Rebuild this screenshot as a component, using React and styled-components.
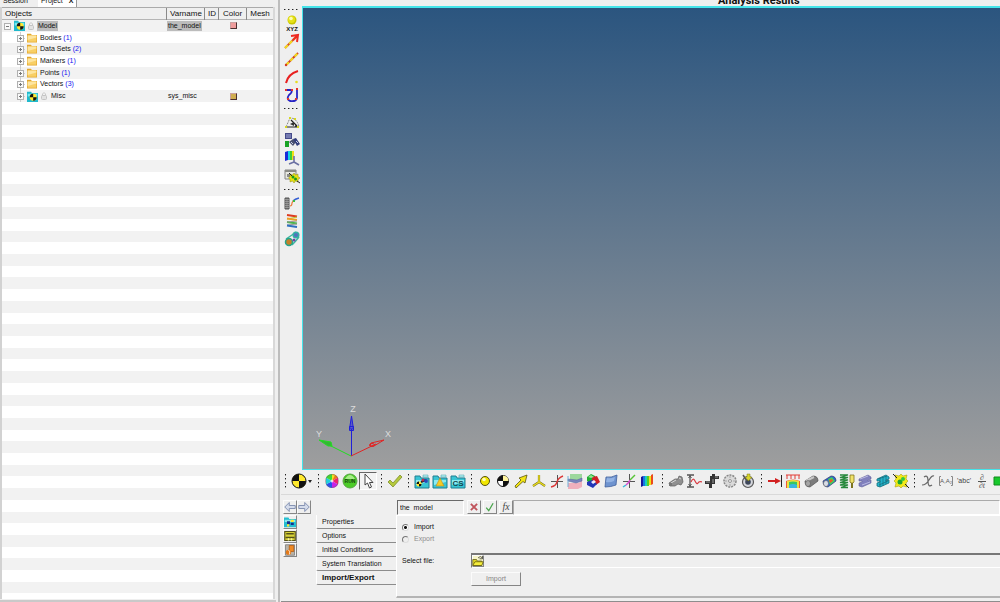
import { useState } from "react";
import styled, { createGlobalStyle, css } from "styled-components";

const GlobalStyle = createGlobalStyle`
  * {
    box-sizing: border-box;
  }

  body {
    margin: 0;
    background: #efefef;
    color: #111;
    font-family: "Liberation Sans", Arial, sans-serif;
    font-size: 7px;
    line-height: 10px;
  }

  button,
  input {
    margin: 0;
    padding: 0;
    border: 0;
    border-radius: 0;
    background: none;
    color: inherit;
    font: inherit;
  }

  svg {
    display: block;
    flex: none;
  }
`;

const Layout = styled.div`
  display: grid;
  grid-template-columns: 276px minmax(0, 1fr);
  height: 100vh;
  overflow: hidden;
`;

/* ---------- browser tree ---------- */

const Sidebar = styled.aside`
  display: flex;
  flex-direction: column;
  min-height: 0;
  padding-bottom: 1px;
  border-bottom: 2px solid #c9c9c9;
`;

const TabStrip = styled.div`
  display: flex;
  align-items: flex-end;
  flex: none;
  height: 7px;
  overflow: hidden;
`;

const StripTab = styled.button`
  display: flex;
  align-items: center;
  gap: 6px;
  height: 12px;
  padding: 0 3px;
  background: ${(props) => (props.$active ? "#fff" : "transparent")};
  border-right: 1px solid ${(props) => (props.$active ? "#999" : "transparent")};
  margin-right: ${(props) => (props.$active ? "0" : "6px")};
`;

const Table = styled.table`
  display: flex;
  flex-direction: column;
  flex: 1;
  min-height: 0;
  margin-right: 1px;
  border-left: 2px solid #d2d2d2;
  border-right: 2px solid #d8d8d8;
`;

const Head = styled.thead`
  display: block;
  flex: none;
`;

const Body = styled.tbody`
  display: flex;
  flex-direction: column;
  flex: 1;
  min-height: 0;
`;

const columns = css`
  display: grid;
  grid-template-columns: 165px 38px 14px 28px minmax(0, 1fr);
`;

const HeadRow = styled.tr`
  ${columns}
  height: 13px;
  border-top: 1px solid #aaa;
  border-bottom: 1px solid #b5b5b5;
  background: #efefef;
`;

const HeadCell = styled.th`
  padding: 0 3px;
  border-right: 1px solid #8a8a8a;
  font-size: 8px;
  font-weight: normal;
  line-height: 12px;
  text-align: ${(props) => (props.$left ? "left" : "center")};

  &:last-child {
    border-right: 0;
  }
`;

const Row = styled.tr`
  ${columns}
  flex: ${(props) => (props.$half ? 1 : 2)} 1 0;
  min-height: 0;
  background: #fff;

  &:nth-child(odd) {
    background: #f2f2f2;
  }

  &:last-child {
    background: #fff;
  }
`;

const Cell = styled.td`
  display: flex;
  align-items: center;
  justify-content: ${(props) => (props.$center ? "center" : "flex-start")};
  gap: 2px;
  min-height: 0;
  padding: 0 0 0 ${(props) => props.$indent || 0}px;
  white-space: nowrap;
`;

const Label = styled.span`
  padding: 0 1px;
  background: ${(props) => (props.$selected ? "#bcbcbc" : "transparent")};
`;

const Count = styled.span`
  color: #1414f0;
`;

const Swatch = styled.span`
  width: 7px;
  height: 7px;
  border: 1px solid;
  border-color: #c9a0a0 #4a3030 #4a3030 #c9a0a0;
  background: ${(props) => props.$color};
`;

/* ---------- work area ---------- */

const Main = styled.main`
  display: flex;
  flex-direction: column;
  min-width: 0;
  min-height: 0;
  margin-left: 2px;
  border-left: 2px solid #bdbdbd;
  padding-left: 1px;
`;

const Stage = styled.div`
  display: flex;
  flex: 1;
  min-height: 0;
`;

const SideTools = styled.div`
  display: flex;
  flex-direction: column;
  align-items: center;
  flex: none;
  width: 21px;
  padding-top: 5px;
`;

const Window = styled.section`
  display: flex;
  flex-direction: column;
  flex: 1;
  min-width: 0;
`;

const Title = styled.h1`
  display: flex;
  align-items: flex-end;
  flex: none;
  height: 6px;
  margin: 0;
  padding-left: 416px;
  overflow: hidden;
  font-family: Roboto, "Liberation Sans", sans-serif;
  font-size: 11px;
  line-height: 10px;
  white-space: nowrap;
`;

const Canvas = styled.div`
  display: flex;
  align-items: flex-end;
  flex: 1;
  padding: 0 0 9px 9px;
  border: 1px solid #45e4ea;
  border-width: 2px 0 1px 1px;
  background: linear-gradient(#2b557f, #9e9e9e);
`;

const BottomTools = styled.div`
  display: flex;
  align-items: center;
  flex: none;
  height: 24px;
  padding-bottom: 2px;
  overflow: hidden;
`;

const Group = styled.div`
  display: flex;
  align-items: center;
  flex: none;
  padding-right: ${(props) => (props.$long ? 2 : 0)}px;
`;

const Grip = styled.span`
  flex: none;
  ${(props) =>
    props.$across
      ? css`
          width: 15px;
          height: 9px;
          background: linear-gradient(90deg, #222 1px, #9a9a9a 1px, #9a9a9a 2px, transparent 2px) 0 4px / 4px 1px repeat-x;
          background-clip: content-box;
          background-repeat: repeat-x;
        `
      : css`
          width: 9px;
          height: 15px;
          background: linear-gradient(#222 1px, #9a9a9a 1px, #9a9a9a 2px, transparent 2px) 4px 0 / 1px 4px repeat-y;
        `}
`;

const ToolButton = styled.button`
  display: flex;
  align-items: center;
  justify-content: center;
  flex: none;
  width: 18px;
  height: 18px;
  border: 1px solid transparent;
  ${(props) =>
    props.$pressed &&
    css`
      border-color: #666 #fff #fff #666;
      background: #f3f3f3;
    `}
`;

const MenuArrow = styled.button`
  display: flex;
  align-items: center;
  width: 6px;
  height: 18px;
`;

/* ---------- property panel ---------- */

const Panel = styled.section`
  flex: none;
  padding: 5px 0 3px 2px;
  border-top: 1px solid #d9d9d9;
  border-bottom: 1px solid #8d8d8d;
`;

const PanelTop = styled.div`
  display: flex;
  height: 15px;
`;

const raised = css`
  display: flex;
  align-items: center;
  justify-content: center;
  flex: none;
  border: 1px solid;
  border-color: #fbfbfb #858585 #858585 #fbfbfb;
  background: #efefef;
`;

const sunken = css`
  border: 1px solid;
  border-color: #6a6a6a #fff #fff #6a6a6a;
`;

const SmallButton = styled.button`
  ${raised}
  width: 14px;
  height: 14px;
`;

const History = styled.div`
  display: flex;
  width: 114px;
`;

const NameInput = styled.input`
  ${sunken}
  width: 67px;
  height: 15px;
  padding: 0 2px;
`;

const NameActions = styled.div`
  display: flex;
  gap: 2px;
  padding-left: 3px;
`;

const ExpressionInput = styled.input`
  ${sunken}
  flex: 1;
  min-width: 0;
  height: 15px;
  padding: 0 2px;
  border-color: #aaa #fff #fff #aaa;
`;

const PanelBody = styled.div`
  display: flex;
`;

const Modes = styled.div`
  display: flex;
  flex-direction: column;
  width: 33px;
`;

const PageTabs = styled.nav`
  display: flex;
  flex-direction: column;
  width: 80px;
`;

const PageTab = styled.button`
  height: 14px;
  padding: 0 5px;
  border-bottom: 1px solid #8c8c8c;
  border-left: 1px solid #fff;
  border-bottom-left-radius: 2px;
  font-size: ${(props) => (props.$active ? 8 : 7)}px;
  font-weight: ${(props) => (props.$active ? "bold" : "normal")};
  text-align: left;
  white-space: nowrap;
`;

const Page = styled.form`
  display: grid;
  grid-template-columns: 69px minmax(0, 1fr);
  grid-template-rows: 12px 12px 15px 14px;
  align-content: start;
  align-items: center;
  flex: 1;
  min-width: 0;
  height: 83px;
  padding: 5px 0 0 5px;
  row-gap: 4px;
  border: 1px solid;
  border-width: 1px 0 2px 1px;
  border-color: #fff #fff #b4b4b4 #fff;
`;

const Choices = styled.div`
  display: flex;
  flex-direction: column;
  grid-column: 1 / -1;
  grid-row: 1 / 3;
  align-self: start;
`;

const Choice = styled.label`
  display: flex;
  align-items: center;
  gap: 5px;
  height: 12px;
  color: ${(props) => (props.$off ? "#8e8e8e" : "#111")};
`;

const Radio = styled.input`
  appearance: none;
  width: 7px;
  height: 7px;
  border: 1px solid;
  border-color: #777 #ddd #ddd #777;
  border-radius: 50%;
  background: ${(props) => (props.disabled ? "#eee" : "#fff")};

  &:checked {
    background: radial-gradient(circle, #111 1px, #fff 2px);
  }
`;

const FileField = styled.div`
  display: flex;
  height: 15px;
  border-top: 2px solid #777;
  border-bottom: 1px solid #fff;
  border-left: 1px solid #777;
`;

const FileInput = styled.input`
  flex: 1;
  min-width: 0;
  padding: 0 3px;
`;

const OpenButton = styled.button`
  ${raised}
  width: 12px;
  height: 12px;
  background: #f6f4c8;
`;

const ImportButton = styled.button`
  ${raised}
  grid-column: 2;
  width: 50px;
  height: 14px;
  color: #858585;
`;

/* ---------- icons ---------- */

const Icon = ({ size = 16, children }) => (
  <svg width={size} height={size} viewBox="0 0 16 16" fill="none" aria-hidden="true">
    {children}
  </svg>
);

const Quarters = ({ r = 7, light = "#ffe92e" }) => (
  <>
    <circle cx="8" cy="8" r={r} fill={light} stroke="#111" />
    <path d={`M8 8V${8 - r}A${r} ${r} 0 0 0 ${8 - r} 8ZM8 8V${8 + r}A${r} ${r} 0 0 0 ${8 + r} 8Z`} fill="#111" />
  </>
);

const CyanFolder = ({ children }) => (
  <Icon>
    <path d="M1 3h5l1 2h8v10H1z" fill="#38c4d4" stroke="#207f90" />
    <path d="M2 7h12v2L2 12z" fill="#8beaf0" />
    <path d="M9 2h5v2H9z" fill="#b5f2f2" stroke="#55a9b4" strokeWidth=".6" />
    {children}
  </Icon>
);

const ModelIcon = () => (
  <Icon size={11}>
    <path d="M0 1h6l1 2h9v13H0z" fill="#20b9cc" />
    <path d="M1 4h14v4H1z" fill="#79e8f0" />
    <circle cx="9" cy="9" r="5" fill="#ffe92e" />
    <path d="M9 9V4a5 5 0 0 0-5 5zM9 9v5a5 5 0 0 0 5-5z" fill="#111" />
  </Icon>
);

const FolderIcon = () => (
  <Icon size={10}>
    <path d="M0 1h6l2 2h8v12H0z" fill="#e2a62c" />
    <path d="M1 4h14v10H1z" fill="#f8cf66" />
    <path d="M1 4h14v3L1 11z" fill="#fde5a0" />
  </Icon>
);

const LockIcon = () => (
  <svg width="8" height="10" viewBox="0 0 8 10" fill="none" aria-hidden="true">
    <path d="M2.500 5V3q1.500-3 3 0v2" stroke="#c8c8c8" />
    <rect x="1.500" y="4.500" width="5" height="4" rx="1" fill="#e2e2e2" stroke="#c4c4c4" />
  </svg>
);

const ExpanderButton = styled.button`
  width: 10px;
  height: 12px;
`;

const Expander = ({ open, onClick }) => (
  <ExpanderButton type="button" aria-label={open ? "Collapse" : "Expand"} onClick={onClick}>
    <svg width="10" height="12" viewBox="0 0 10 12" fill="none">
      {!open && <path d="M5.500 0v3M5.500 9v3M9 6.500h1" stroke="#cfcfcf" />}
      <rect x="2.500" y="3.500" width="6" height="6" fill="#fafafa" stroke="#b0b0b0" />
      <path d={open ? "M4 6.500h3" : "M4 6.500h3M5.500 5v3"} stroke="#777" />
    </svg>
  </ExpanderButton>
);

const icons = {
  point: (
    <Icon>
      <circle cx="8" cy="5" r="4.500" fill="#c9c500" />
      <circle cx="7.500" cy="4.500" r="3.500" fill="#e6e21a" />
      <circle cx="7" cy="3.500" r="1.800" fill="#fdfbb0" />
      <text x="8" y="16" fontSize="6" fontWeight="bold" textAnchor="middle" fill="#111">XYZ</text>
    </Icon>
  ),
  vector: (
    <Icon>
      <path d="M1 15 13 3" stroke="#d9552a" strokeWidth="2" />
      <path d="M1 15 13 3" stroke="#f2dc20" strokeWidth="2" strokeDasharray="4 2" />
      <path d="M7 3l7-1-1 7M9 7l5-5" stroke="#ee2a22" strokeWidth="2" />
    </Icon>
  ),
  line: (
    <Icon>
      <path d="M2 14 14 2" stroke="#d33b27" strokeWidth="2" />
      <path d="M2 14 14 2" stroke="#f0dc1e" strokeWidth="2" strokeDasharray="4 2" />
      <circle cx="2" cy="14" r="1.200" fill="#d33b27" />
    </Icon>
  ),
  arc: (
    <Icon>
      <path d="M2 14Q4 5 14 2" stroke="#e82020" strokeWidth="2" />
      <circle cx="12.500" cy="13" r="1.300" fill="#e6de20" />
    </Icon>
  ),
  curve: (
    <Icon>
      <path d="M2 3h5q2 2-2 5-3 4 1 6 6 1 7-3L13 2" stroke="#2723c4" strokeWidth="1.800" />
      <path d="M1 2h2v2H1zM7 2h2v2H7zM12 1h2v2h-2zM3 11h2v2H3zM11 11h2v2h-2z" fill="#e2332e" />
    </Icon>
  ),
  angle: (
    <Icon>
      <path d="M2 13 6 4q7 0 9 9" stroke="#888" strokeDasharray="2 1" />
      <path d="M3 13h11M7 6l6 6" stroke="#222" strokeWidth="1.200" />
      <path d="M6 10l4-2v4zM11 11l4 2h-4z" fill="#333" />
      <path d="M1 12h2v2H1zM5 3h2v2H5zM13 12h2v2h-2zM10 4h2v2h-2z" fill="#d8d820" />
    </Icon>
  ),
  joints: (
    <Icon>
      <path d="M1 1h7v6H1z" fill="#454b8a" />
      <path d="M2 3h5M2 5h5" stroke="#a6acd8" />
      <path d="M1 9h4v6H1z" fill="#18a324" />
      <path d="M5 10l4-3 3 3-3 4z" fill="#48506f" />
      <path d="M9 7l3-1 4 6-3 2z" fill="#313d7b" />
      <path d="M7 10l2 2M12 9l2 2" stroke="#c6cbe5" />
    </Icon>
  ),
  contour: (
    <Icon>
      <path d="M1 2l3-1v9l-3 1z" fill="#1a2bd9" />
      <path d="M4 1h2v9H4z" fill="#19d4df" />
      <path d="M6 1h2v9H6z" fill="#40cf30" />
      <path d="M8 1h2v9H8z" fill="#f1df16" />
      <path d="M10 6v6M10 12l5 3M10 12l-5 2" stroke="#6c71a3" strokeWidth="1.600" />
    </Icon>
  ),
  gearbox: (
    <Icon>
      <path d="M1 2h11v9H1z" fill="#e8e8e2" stroke="#848484" />
      <path d="M1 2h11v2H1zM3 6h3v3H3z" fill="#8b8b86" />
      <path d="M10 5l1.500 2 2.500-1v2.500l2 1.500-2 1.500V14l-2.500-1L10 15l-1.500-2L6 14v-2.500L4.500 10 6 8.500V6l2.500 1z" fill="#e8e012" stroke="#8a8718" strokeWidth=".5" />
      <circle cx="9" cy="9" r="1.500" fill="#1a9a1e" />
      <circle cx="11.500" cy="11" r="1.500" fill="#1a9a1e" />
      <path d="M5 5l3 3M13 13l3 2" stroke="#222" />
    </Icon>
  ),
  spring: (
    <Icon>
      <path d="M1 3h4v11H1z" fill="#777" stroke="#555" />
      <path d="M2 4v9M4 4v9" stroke="#bbb" strokeDasharray="1 1" />
      <path d="M6 11q2 0 2-3 1-3 3-3" stroke="#e77d3c" strokeWidth="1.200" />
      <path d="M9 6q2-2 6-3" stroke="#355fd4" strokeWidth="1.500" />
      <path d="M9 5h2v2H9z" fill="#33bb44" />
    </Icon>
  ),
  coil: (
    <Icon>
      <path d="M3 2l10 1.500" stroke="#de3b20" strokeWidth="2" />
      <path d="M13 4L3 6" stroke="#b9c832" />
      <path d="M3 5.500L13 7" stroke="#ef9e22" strokeWidth="2" />
      <path d="M3 9l10 1.500" stroke="#48b64a" strokeWidth="2" />
      <path d="M13 8L3 9M13 11L3 12" stroke="#999" />
      <path d="M3 12.500L13 14" stroke="#2d70c0" strokeWidth="2" />
    </Icon>
  ),
  belt: (
    <Icon>
      <path d="M2 8Q5 6 8 4t4-3M8 14q3-3 7-8" stroke="#3eb6a0" strokeWidth="1.500" />
      <circle cx="5" cy="11" r="3.500" fill="#c4812a" stroke="#24a58b" strokeWidth="1.500" />
      <circle cx="12" cy="4" r="2.800" fill="#5372be" stroke="#33b1a5" strokeWidth="1.500" />
      <circle cx="10" cy="9" r="1.500" fill="#7140a8" />
    </Icon>
  ),
  cg: (
    <Icon>
      <Quarters />
    </Icon>
  ),
  wheel: (
    <Icon>
      <path d="M8 8V1a7 7 0 0 1 6 3.500z" fill="#f07818" />
      <path d="M8 8l6-3.500v7z" fill="#f02070" />
      <path d="M8 8l6 3.500A7 7 0 0 1 8 15z" fill="#c820e8" />
      <path d="M8 8v7a7 7 0 0 1-6-3.500z" fill="#2850f0" />
      <path d="M8 8l-6 3.500v-7z" fill="#20d0dc" />
      <path d="M8 8L2 4.500A7 7 0 0 1 8 1z" fill="#40d930" />
      <path d="M8 8V1l3 1z" fill="#f4e020" />
      <circle cx="8" cy="8" r="1.500" fill="#fff" opacity=".7" />
      <circle cx="8" cy="8" r="6.500" stroke="#666" strokeWidth=".5" />
    </Icon>
  ),
  run: (
    <Icon>
      <circle cx="8" cy="8" r="7" fill="#4ccc28" stroke="#58a545" />
      <path d="M3 6q5-8 10 0z" fill="#a7ee88" />
      <text x="8" y="10" fontSize="5" fontWeight="bold" textAnchor="middle" fill="#17450e">RUN</text>
    </Icon>
  ),
  cursor: (
    <Icon>
      <path d="M5 1v11l2.500-2 2 5 2-1-2-4.500H13z" fill="#fff" stroke="#444" />
    </Icon>
  ),
  check: (
    <Icon>
      <path d="M1 9l2-2 3 3 7-8 2 2-9 10z" fill="#b5c93c" stroke="#7d8f2c" strokeWidth=".8" />
    </Icon>
  ),
  folderModel: (
    <CyanFolder>
      <circle cx="5" cy="11" r="2.500" fill="#ffe92e" />
      <path d="M5 11V8.500A2.500 2.500 0 0 0 2.500 11zM5 11v2.500A2.500 2.500 0 0 0 7.500 11z" fill="#111" />
      <path d="M7 9l5-2" stroke="#222" strokeWidth="2" />
      <circle cx="9" cy="7" r="1.500" fill="#c42a4a" />
      <circle cx="12" cy="8" r="2" fill="#254bb7" />
    </CyanFolder>
  ),
  folderCone: (
    <CyanFolder>
      <path d="M8 5l4 8H4z" fill="#f4cb25" stroke="#c48a14" strokeWidth=".6" />
    </CyanFolder>
  ),
  folderCs: (
    <CyanFolder>
      <text x="8" y="13" fontSize="8" fontWeight="bold" textAnchor="middle" fill="#16454c">CS</text>
    </CyanFolder>
  ),
  ball: (
    <Icon>
      <circle cx="8" cy="8" r="4.500" fill="#f1e600" stroke="#555213" />
      <circle cx="7" cy="6.500" r="1.800" fill="#fffcb8" />
    </Icon>
  ),
  body: (
    <Icon>
      <Quarters r={5.5} light="#fff" />
      <path d="M8 8V2.500A5.500 5.500 0 0 1 13.500 8z" fill="#fff59e" />
    </Icon>
  ),
  arrow: (
    <Icon>
      <path d="M14 2L12 10 10 8.500 3 15 2 13 8 7 6 5z" fill="#f3e512" stroke="#5a5512" strokeWidth=".8" />
    </Icon>
  ),
  axes: (
    <Icon>
      <path d="M8 2v7l6 4M8 9l-6 4" stroke="#77701c" strokeWidth="2.200" />
      <path d="M8 2v7l6 4M8 9l-6 4" stroke="#eadd1d" strokeWidth="1.400" />
    </Icon>
  ),
  spline: (
    <Icon>
      <path d="M8.500 2v13M2 8.500h12" stroke="#555" />
      <path d="M2 14q5-1 6-5t6-6" stroke="#dc3737" strokeWidth="1.400" />
    </Icon>
  ),
  surfaces: (
    <Icon>
      <path d="M3 1h12v7H3z" fill="#9cd89c" />
      <path d="M1 10h11l3-3v7l-4 2H1z" fill="#efb0bd" />
      <path d="M1 6l9 1 5-2v3l-6 2-8-2z" fill="#7784bd" stroke="#545d9a" strokeWidth=".5" />
      <path d="M1 3v11" stroke="#70b0d8" />
    </Icon>
  ),
  solids: (
    <Icon>
      <path d="M2 4l4-3 4 2v5l-4 3-4-3z" fill="#1fae32" />
      <path d="M7 4l5-1 3 6-4 3-4-3z" fill="#cf1f25" />
      <path d="M2 9l5-2 5 4-4 4-6-3z" fill="#2236b7" />
      <path d="M3 4l3-2 3 2-3 1z" fill="#8fe491" />
      <path d="M6 9l3-2 2 2-3 2z" fill="#eef" />
    </Icon>
  ),
  plate: (
    <Icon>
      <path d="M3 4q5 1 11-2l-1 10q-5 2-11 2z" fill="#6e93cf" stroke="#40609c" strokeWidth=".8" />
      <path d="M4 5q4 1 8-1l-1 4q-4 2-8 1z" fill="#93b3e4" />
    </Icon>
  ),
  colorAxes: (
    <Icon>
      <path d="M8.500 1v14M2 8.500h12" stroke="#555" />
      <path d="M2 14l3-2" stroke="#3ab5dc" strokeWidth="1.500" />
      <path d="M5 12q3-2 4-5" stroke="#d94ad3" strokeWidth="1.500" />
      <path d="M9 7l5-5" stroke="#57c436" strokeWidth="1.500" />
    </Icon>
  ),
  rainbow: (
    <Icon>
      <path d="M2 4l2-1v10l-2 1z" fill="#17189c" />
      <path d="M4 3h2v10H4z" fill="#1678e4" />
      <path d="M6 3h2v10H6z" fill="#1ccfba" />
      <path d="M8 3h2v10H8z" fill="#56cf24" />
      <path d="M10 3h2v9h-2z" fill="#f2e317" />
      <path d="M12 2l2-1v10l-2 1z" fill="#ea4a1c" />
    </Icon>
  ),
  bushing: (
    <Icon>
      <path d="M1 10l6-4 3 0 1-3 3 1 1 5-2 3-3-1-3 2H2z" fill="#909090" stroke="#5c5c5c" strokeWidth=".7" />
      <path d="M3 10l5-3M11 5l2 1" stroke="#d8d8d8" />
      <path d="M1 10h3v3H1z" fill="#777" />
    </Icon>
  ),
  damper: (
    <Icon>
      <path d="M1 2h7M1 14h7M4 2v12" stroke="#555" strokeWidth="1.300" />
      <path d="M2.500 5L4 3l1.500 2M2.500 11L4 13l1.500-2" stroke="#555" />
      <path d="M5 9q2-5 4-1t3 2 4-1" stroke="#d83a42" strokeWidth="1.200" />
    </Icon>
  ),
  joint: (
    <Icon>
      <path d="M8 1h3v2h4v3h-4v5H8v4H5v-4H1V8h5V3h2z" fill="#343434" />
      <path d="M11 4h3M2 9h4M9 6v4" stroke="#999" />
    </Icon>
  ),
  gear: (
    <Icon>
      <circle cx="8" cy="8" r="6" fill="#dadada" stroke="#888" strokeWidth="1.500" strokeDasharray="2 1" />
      <circle cx="8" cy="8" r="1.500" fill="#eee" stroke="#999" />
      <path d="M8 3v2M8 11v2M3 8h2M11 8h2" stroke="#aaa" />
    </Icon>
  ),
  motor: (
    <Icon>
      <circle cx="8" cy="9" r="5.500" fill="#d4d6dc" stroke="#555" strokeWidth="1.200" />
      <circle cx="8" cy="9" r="2.800" fill="#3d4659" />
      <path d="M3 2l4 6" stroke="#555" strokeWidth="1.500" />
      <path d="M7 1h3v3h2L8.500 8 5 4h2z" fill="#d8d52c" stroke="#777518" strokeWidth=".5" />
    </Icon>
  ),
  force: (
    <Icon>
      <path d="M1 8h10" stroke="#d22020" strokeWidth="2" />
      <path d="M8 5l6 3-6 3z" fill="#d22020" />
      <path d="M14.500 2v12" stroke="#222" />
    </Icon>
  ),
  pressure: (
    <Icon>
      <path d="M1 2h14M2 2v4M6 2v4M10 2v4M14 2v4" stroke="#e13a35" />
      <path d="M1 8q7-3 14 0v7H1z" fill="#ee5a3a" />
      <path d="M2 8q6-2 12 0v7H2z" fill="#ece241" />
      <path d="M4 9q4-1 8 0v6H4z" fill="#39c764" />
      <path d="M4 12q4-2 8 0v3H4z" fill="#3bb6e0" />
    </Icon>
  ),
  cylinder: (
    <Icon>
      <path d="M2 8l8-5q5 0 5 5l-8 6Q2 14 2 8z" fill="#7c7c7c" stroke="#505050" strokeWidth=".7" />
      <path d="M3 8l8-4" stroke="#c8c8c8" strokeWidth="2" />
      <ellipse cx="5" cy="10.500" rx="2.500" ry="3" fill="#a5a5a5" stroke="#555" strokeWidth=".6" />
    </Icon>
  ),
  flexBody: (
    <Icon>
      <path d="M2 8l8-5q5 0 5 5l-8 6Q2 14 2 8z" fill="#2e5fd2" stroke="#3a3f60" strokeWidth=".7" />
      <path d="M7 6l4-2 3 4-5 4z" fill="#3fd45a" />
      <path d="M8 7l3-1 1 2-3 2z" fill="#ee5924" />
      <ellipse cx="5" cy="10.500" rx="2.500" ry="3" fill="#d8dce5" stroke="#555" strokeWidth=".6" />
    </Icon>
  ),
  springDamper: (
    <Icon>
      <path d="M1 2h8L1 4.500h8L1 7h8L1 9.500h8L1 12h8L2 14.500h7" stroke="#27883c" strokeWidth="1.300" />
      <path d="M11 2h4v7l-1 1h-2l-1-1z" fill="#f0e36a" stroke="#807521" strokeWidth=".8" />
      <path d="M13 10v5" stroke="#7d741f" strokeWidth="2" />
    </Icon>
  ),
  beam: (
    <Icon>
      <path d="M2 6l9-4 3 2v2l-3 1v1l3-1v3l-9 4-3-1v-3l3-1V8L2 8z" fill="#8080bd" stroke="#60609a" strokeWidth=".6" />
      <path d="M3 6l8-3M5 12l8-3" stroke="#b9b9e2" />
    </Icon>
  ),
  meshBeam: (
    <Icon>
      <path d="M2 6l9-4 3 2v2l-3 1v1l3-1v3l-9 4-3-1v-3l3-1V8L2 8z" fill="#23b3ca" stroke="#13707f" strokeWidth=".8" />
      <path d="M5 5v9M8 4v9M11 3v8M3 6l9-3M4 12l9-4" stroke="#14616e" strokeWidth=".6" />
    </Icon>
  ),
  contact: (
    <Icon>
      <path d="M8 1l2 2 4-1-1 4 2 2-2 2 1 4-4-1-2 2-2-2-4 1 1-4-2-2 2-2-1-4 4 1z" fill="#f2ea18" stroke="#a79e16" strokeWidth=".6" />
      <path d="M0 1l4 4M12 11l4 4" stroke="#222" />
      <circle cx="7" cy="9" r="2.500" fill="#1fa830" />
      <circle cx="10" cy="6" r="2" fill="#32c840" />
    </Icon>
  ),
  variable: (
    <Icon>
      <path d="M4 4q4-3 4 4t4 4M14 3q-2-1-5 4T2 12" stroke="#666" strokeWidth="1.200" />
    </Icon>
  ),
  array: (
    <Icon>
      <path d="M3 3.500H1.500v9H3M13 3.500h1.500v9H13" stroke="#888" />
      <text x="8" y="10" fontSize="6" textAnchor="middle" fill="#555">A,A₂</text>
    </Icon>
  ),
  string: (
    <Icon>
      <text x="8" y="10" fontSize="7" textAnchor="middle" fill="#444">'abc'</text>
    </Icon>
  ),
  derivative: (
    <Icon>
      <g fontFamily="Liberation Serif, serif" fontStyle="italic" fontSize="8" textAnchor="middle" fill="#555">
        <text x="8" y="7">∂</text>
        <text x="8" y="15">∂t</text>
      </g>
      <path d="M4 8.500h8" stroke="#555" />
    </Icon>
  ),
  sensor: (
    <Icon>
      <path d="M2 4h8v8H2z" fill="#18c82c" stroke="#118a1d" />
      <path d="M10 8h6" stroke="#222" strokeWidth="2" />
    </Icon>
  ),
};

const ArrowIcon = ({ flip }) => (
  <Icon size={12}>
    <g transform={flip ? "translate(16 0) scale(-1 1)" : undefined}>
      <path d="M1 8l6-6v4h8v4H7v4z" fill="#d5dceb" stroke="#8391b2" strokeWidth="1.300" />
    </g>
  </Icon>
);

const Triad = () => (
  <svg width="84" height="70" viewBox="0 0 84 70" fill="none" role="img" aria-label="Global axes">
    <path d="M39.500 66V33" stroke="#2020d8" />
    <path d="M37.500 39l2-13 2 13z" fill="#5a5ac8" stroke="#2020d8" />
    <path d="M37.500 36.500h4v4h-4z" stroke="#2020d8" />
    <path d="M39 66l25-12" stroke="#e02525" />
    <path d="M72 50l-13 3-1 3 4 0z" stroke="#e02525" />
    <ellipse cx="60" cy="55" rx="2.500" ry="1.500" stroke="#e02525" />
    <path d="M39 66L17 55" stroke="#22dc22" />
    <path d="M7 50l12 2 1 4-4 0z" fill="#35b535" stroke="#22dc22" />
    <g fill="#dcdcdc" fontSize="9" textAnchor="middle">
      <text x="41" y="22">Z</text>
      <text x="76" y="47">X</text>
      <text x="7" y="47">Y</text>
    </g>
  </svg>
);

/* ---------- data ---------- */

const folders = [
  { name: "Bodies", count: 1 },
  { name: "Data Sets", count: 2 },
  { name: "Markers", count: 1 },
  { name: "Points", count: 1 },
  { name: "Vectors", count: 3 },
];

const sideGroups = [
  ["point", "vector", "line", "arc", "curve"],
  ["angle", "joints", "contour", "gearbox"],
  ["spring", "coil", "belt"],
];

const bottomGroups = [
  ["check"],
  ["folderModel", "folderCone", "folderCs"],
  ["ball", "body", "arrow", "axes", "spline", "surfaces", "solids", "plate", "colorAxes", "rainbow"],
  ["bushing", "damper", "joint", "gear", "motor"],
  ["force", "pressure", "cylinder", "flexBody", "springDamper", "beam", "meshBeam", "contact"],
  ["variable", "array", "string", "derivative", "sensor"],
];

const pages = ["Properties", "Options", "Initial Conditions", "System Translation", "Import/Export"];

const BLANK_ROWS = 43;

const Tool = ({ name, pressed }) => (
  <ToolButton type="button" aria-label={name} $pressed={pressed}>
    {icons[name]}
  </ToolButton>
);

const Browser = () => {
  const [open, setOpen] = useState(true);

  return (
    <Sidebar>
      <TabStrip>
        <StripTab>Session</StripTab>
        <StripTab $active>
          Project <b>X</b>
        </StripTab>
      </TabStrip>
      <Table>
        <Head>
          <HeadRow>
            <HeadCell $left>Objects</HeadCell>
            <HeadCell>Varname</HeadCell>
            <HeadCell>ID</HeadCell>
            <HeadCell>Color</HeadCell>
            <HeadCell>Mesh</HeadCell>
          </HeadRow>
        </Head>
        <Body>
          <Row>
            <Cell>
              <Expander open={open} onClick={() => setOpen(!open)} />
              <ModelIcon />
              <LockIcon />
              <Label $selected>Model</Label>
            </Cell>
            <Cell>
              <Label $selected>the_model</Label>
            </Cell>
            <Cell />
            <Cell $center>
              <Swatch $color="#ef9c9c" />
            </Cell>
            <Cell />
          </Row>
          {open &&
            folders.map((folder) => (
              <Row key={folder.name}>
                <Cell $indent={13}>
                  <Expander />
                  <FolderIcon />
                  <Label>
                    {folder.name} <Count>({folder.count})</Count>
                  </Label>
                </Cell>
              </Row>
            ))}
          {open && (
            <Row>
              <Cell $indent={13}>
                <Expander />
                <ModelIcon />
                <LockIcon />
                <Label>Misc</Label>
              </Cell>
              <Cell>
                <Label>sys_misc</Label>
              </Cell>
              <Cell />
              <Cell $center>
                <Swatch $color="#d0ad50" />
              </Cell>
              <Cell />
            </Row>
          )}
          {Array.from({ length: BLANK_ROWS }, (_, i) => (
            <Row key={i} $half={i === BLANK_ROWS - 1} />
          ))}
        </Body>
      </Table>
    </Sidebar>
  );
};

const Properties = () => {
  const [page, setPage] = useState("Import/Export");

  return (
    <Panel>
      <PanelTop>
        <History>
          <SmallButton aria-label="Back">
            <ArrowIcon />
          </SmallButton>
          <SmallButton aria-label="Forward">
            <ArrowIcon flip />
          </SmallButton>
        </History>
        <NameInput aria-label="Name" defaultValue="the_model" />
        <NameActions>
          <SmallButton aria-label="Reject">
            <Icon size={10}>
              <path d="M3 3l10 10M13 3L3 13" stroke="#c0545c" strokeWidth="3" />
            </Icon>
          </SmallButton>
          <SmallButton aria-label="Accept">
            <Icon size={10}>
              <path d="M2 9l4 5 7-12" stroke="#4aa54c" strokeWidth="2" />
            </Icon>
          </SmallButton>
          <SmallButton aria-label="Expression">
            <Icon size={12}>
              <text x="8" y="12" fontSize="13" fontStyle="italic" fontFamily="Liberation Serif, serif" textAnchor="middle" fill="#444">
                fx
              </text>
            </Icon>
          </SmallButton>
        </NameActions>
        <ExpressionInput aria-label="Expression value" />
      </PanelTop>
      <PanelBody>
        <Modes>
          <SmallButton aria-label="Model">
            <Icon size={12}>
              <path d="M0 2h6l1 2h9v11H0z" fill="#25bdd0" />
              <path d="M1 5h14v3H1z" fill="#8aeaf0" />
              <path d="M4 7h4v4H4zM9 9h4v3H9z" fill="#172d8c" />
              <path d="M4 11h3v3H4zM9 5h4v3H9z" fill="#ffe92e" />
            </Icon>
          </SmallButton>
          <SmallButton aria-label="Panel">
            <Icon size={12}>
              <path d="M1 2h14v12H1z" fill="#d9d336" stroke="#55521a" strokeWidth="1.500" />
              <path d="M3 4h10v2H3zM2 9h12v2H2z" fill="#55521a" />
              <path d="M5 11h2v3H5zM9 11h2v3H9z" fill="#f8f5a0" />
            </Icon>
          </SmallButton>
          <SmallButton aria-label="Parts">
            <Icon size={12}>
              <path d="M2 1h12v14H2z" fill="#b9b3a8" stroke="#777" />
              <path d="M7 2h6v8H7z" fill="#f08a24" stroke="#b45c10" />
              <circle cx="6" cy="11" r="3.500" fill="#e47a1a" />
              <path d="M6 8q3 2 1 6" stroke="#fff" />
            </Icon>
          </SmallButton>
        </Modes>
        <PageTabs>
          {pages.map((name) => (
            <PageTab key={name} $active={name === page} onClick={() => setPage(name)}>
              {name}
            </PageTab>
          ))}
        </PageTabs>
        <Page onSubmit={(e) => e.preventDefault()}>
          <Choices>
            <Choice>
              <Radio type="radio" name="direction" defaultChecked />
              Import
            </Choice>
            <Choice $off>
              <Radio type="radio" name="direction" disabled />
              Export
            </Choice>
          </Choices>
          <label htmlFor="file">Select file:</label>
          <FileField>
            <OpenButton type="button" aria-label="Open file">
              <Icon size={12}>
                <path d="M1 6h5l1 2h6v6H1z" fill="#e2d722" stroke="#5f5a10" />
                <path d="M4 9h11l-2 5H1z" fill="#f6ee3c" stroke="#5f5a10" />
                <path d="M8 4q3-4 6 0M14 1v4h-4" stroke="#333" />
              </Icon>
            </OpenButton>
            <FileInput id="file" type="text" />
          </FileField>
          <ImportButton type="submit" disabled>
            Import
          </ImportButton>
        </Page>
      </PanelBody>
    </Panel>
  );
};

const App = () => (
  <>
    <GlobalStyle />
    <Layout>
      <Browser />
      <Main>
        <Stage>
          <SideTools role="toolbar" aria-label="Geometry">
            {sideGroups.map((group) => [
              <Grip key={group[0] + "-grip"} $across />,
              ...group.map((name) => <Tool key={name} name={name} />),
            ])}
          </SideTools>
          <Window>
            <Title>Analysis Results</Title>
            <Canvas>
              <Triad />
            </Canvas>
          </Window>
        </Stage>
        <BottomTools role="toolbar" aria-label="Model entities">
          <Group>
            <Grip />
            <Tool name="cg" />
            <MenuArrow aria-label="More">
              <svg width="4" height="3" viewBox="0 0 4 3">
                <path d="M0 0h4L2 3z" fill="#222" />
              </svg>
            </MenuArrow>
          </Group>
          <Group>
            <Grip />
            <Tool name="wheel" />
            <Tool name="run" />
            <Tool name="cursor" pressed />
          </Group>
          {bottomGroups.map((group) => (
            <Group key={group[0]} $long={group.length > 8}>
              <Grip />
              {group.map((name) => (
                <Tool key={name} name={name} />
              ))}
            </Group>
          ))}
        </BottomTools>
        <Properties />
      </Main>
    </Layout>
  </>
);

export default App;
